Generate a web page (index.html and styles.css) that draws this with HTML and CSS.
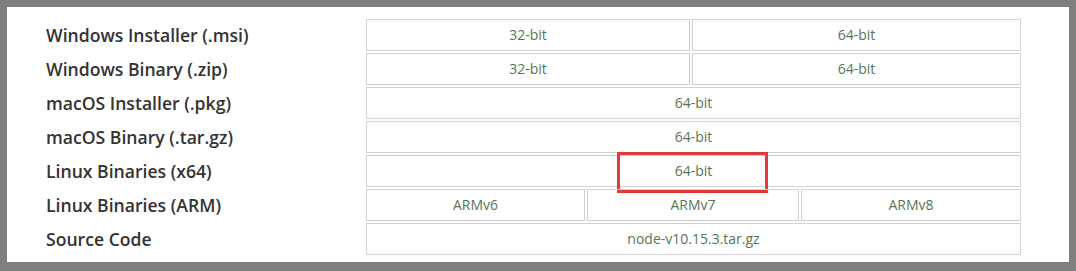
FILE: index.html
```html
<!DOCTYPE html>
<html lang="en">
<head>
<meta charset="utf-8">
<title>Downloads</title>
<link rel="stylesheet" href="styles.css">
</head>
<body>
<div class="panel">
  <div class="downloads">
    <div class="label">Windows Installer (.msi)</div>
    <div class="cells">
      <a class="cell span3" href="#">32-bit</a>
      <a class="cell span3" href="#">64-bit</a>
    </div>
    <div class="label">Windows Binary (.zip)</div>
    <div class="cells">
      <a class="cell span3" href="#">32-bit</a>
      <a class="cell span3" href="#">64-bit</a>
    </div>
    <div class="label">macOS Installer (.pkg)</div>
    <div class="cells">
      <a class="cell span6" href="#">64-bit</a>
    </div>
    <div class="label">macOS Binary (.tar.gz)</div>
    <div class="cells">
      <a class="cell span6" href="#">64-bit</a>
    </div>
    <div class="label">Linux Binaries (x64)</div>
    <div class="cells">
      <a class="cell span6 highlighted" href="#">64-bit<span class="mark"></span></a>
    </div>
    <div class="label">Linux Binaries (ARM)</div>
    <div class="cells">
      <a class="cell span2" href="#">ARMv6</a>
      <a class="cell span2" href="#">ARMv7</a>
      <a class="cell span2" href="#">ARMv8</a>
    </div>
    <div class="label">Source Code</div>
    <div class="cells">
      <a class="cell span6" href="#">node-v10.15.3.tar.gz</a>
    </div>
  </div>
</div>
</body>
</html>
```
FILE: styles.css
```css
html, body {
  margin: 0;
  padding: 0;
}
body {
  background: #7f7f7f;
  height: 271px;
  overflow: hidden;
  padding: 7px 7px 9px 7px;
  box-sizing: border-box;
}
.panel {
  background: #ffffff;
  height: 255px;
  box-sizing: border-box;
  padding: 12px 48px 0 39px;
}
.downloads {
  display: grid;
  grid-template-columns: 320px 655px;
  row-gap: 2px;
}
.label {
  font-family: "Open Sans", "Liberation Sans", sans-serif;
  font-weight: 600;
  font-size: 17.6px;
  color: #333333;
  height: 32px;
  line-height: 32px;
  white-space: nowrap;
}
.cells {
  display: grid;
  grid-template-columns: 108.5px 108.5px 103px 107px 109px 109px;
  column-gap: 2px;
}
.cell {
  position: relative;
  display: block;
  height: 32px;
  line-height: 30px;
  box-sizing: border-box;
  border: 1px solid #d2d2d2;
  text-align: center;
  font-family: "Open Sans", "Liberation Sans", sans-serif;
  font-size: 14px;
  color: #587556;
  text-decoration: none;
}
.span2 { grid-column: span 2; }
.span3 { grid-column: span 3; }
.span6 { grid-column: span 6; }
.mark {
  position: absolute;
  left: 250px;
  top: -4px;
  width: 151px;
  height: 41px;
  box-sizing: border-box;
  border: 3px solid #e2393c;
}
```
